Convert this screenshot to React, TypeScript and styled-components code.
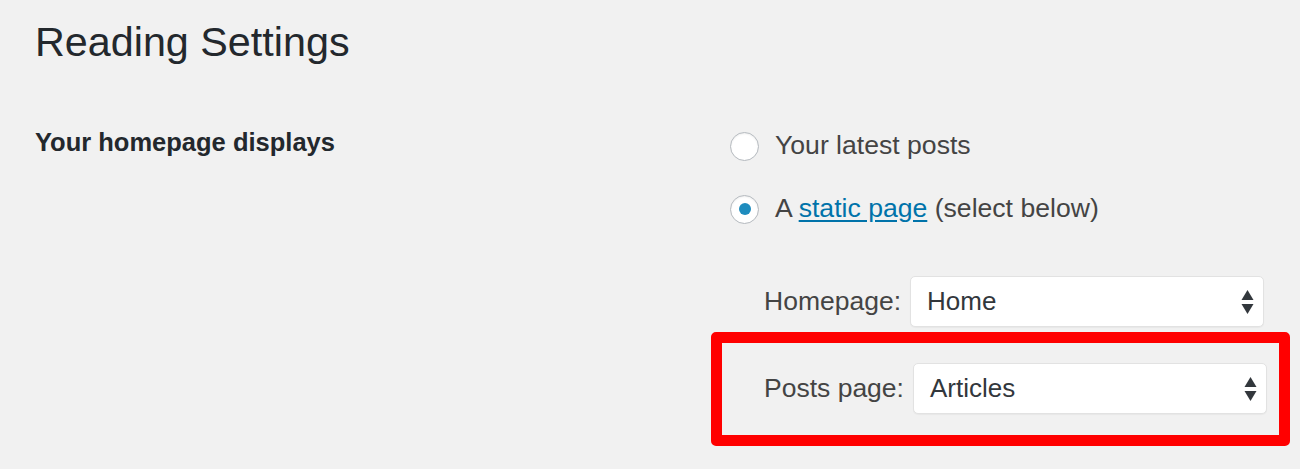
import React from "react";
import styled, { createGlobalStyle } from "styled-components";

const GlobalStyle = createGlobalStyle`
  html, body {
    margin: 0;
    padding: 0;
    background: #f1f1f1;
  }
  body {
    font-family: "Liberation Sans", Arial, sans-serif;
    color: #444;
  }
`;

const Page = styled.div`
  min-height: 100vh;
  padding: 17px 0 0 35px;
  box-sizing: border-box;
  background: #f1f1f1;
`;

const Title = styled.h1`
  margin: 0;
  font-size: 41.3px;
  line-height: 50px;
  font-weight: 400;
  color: #23282d;
`;

const FormTable = styled.div`
  display: grid;
  grid-template-columns: 695px 1fr;
  margin-top: 59.5px;
`;

const RowLabel = styled.div`
  font-size: 25.5px;
  line-height: 30px;
  font-weight: 700;
  color: #23282d;
`;

const Fields = styled.div`
  display: flex;
  flex-direction: column;
`;

const RadioRow = styled.label`
  display: flex;
  align-items: center;
  gap: 16px;
  height: 40px;
  margin-bottom: 22.5px;
  font-size: 26.6px;
  color: #444;
  cursor: pointer;
`;

const RadioCircle = styled.span<{ $checked?: boolean }>`
  flex: none;
  width: 29px;
  height: 29px;
  border-radius: 50%;
  box-sizing: border-box;
  border: 1px solid #b4b9be;
  background: #fff;
  box-shadow: inset 0 1px 2px rgba(0, 0, 0, 0.07);
  display: flex;
  align-items: center;
  justify-content: center;

  &::before {
    content: "";
    display: ${({ $checked }) => ($checked ? "block" : "none")};
    width: 12px;
    height: 12px;
    border-radius: 50%;
    background: #1e8cbe;
  }
`;

const RadioText = styled.span`
  margin-top: -2px;
  white-space: nowrap;
`;

const Link = styled.a`
  color: #0073aa;
  text-decoration: underline;
  text-underline-offset: 3px;
`;

const SelectList = styled.div`
  display: flex;
  flex-direction: column;
  gap: 36px;
  margin-top: 24.5px;
  padding-left: 34px;
`;

const SelectRow = styled.div<{ $highlight?: boolean }>`
  position: relative;
  align-self: flex-start;
  display: flex;
  align-items: center;
  gap: 9px;

  &::after {
    content: "";
    display: ${({ $highlight }) => ($highlight ? "block" : "none")};
    position: absolute;
    top: -31px;
    bottom: -32px;
    left: -53px;
    right: -23px;
    border: 11.5px solid #ff0000;
    border-radius: 5px;
    pointer-events: none;
  }
`;

const FieldLabel = styled.span`
  flex: none;
  white-space: nowrap;
  font-size: 26.5px;
  color: #444;
`;

const Select = styled.div`
  flex: none;
  width: 354px;
  height: 51px;
  box-sizing: border-box;
  display: flex;
  align-items: center;
  justify-content: space-between;
  padding: 0 9px 0 16px;
  background: #fff;
  border: 1px solid #e2e2e2;
  border-radius: 5px;
  box-shadow: 0 1px 1px rgba(0, 0, 0, 0.04);
  font-size: 26px;
  color: #32373c;
`;

const Arrows = () => (
  <svg width="13" height="24" viewBox="0 0 13 24">
    <path d="M6.5 0 L12.5 10 L0.5 10 Z" fill="#32373c" />
    <path d="M0.5 14 L12.5 14 L6.5 24 Z" fill="#32373c" />
  </svg>
);

const App: React.FC = () => {
  return (
    <>
      <GlobalStyle />
      <Page>
        <Title>Reading Settings</Title>
        <FormTable>
          <RowLabel>Your homepage displays</RowLabel>
          <Fields>
            <RadioRow>
              <RadioCircle />
              <RadioText>Your latest posts</RadioText>
            </RadioRow>
            <RadioRow>
              <RadioCircle $checked />
              <RadioText>
                A <Link href="#">static page</Link> (select below)
              </RadioText>
            </RadioRow>
            <SelectList>
              <SelectRow>
                <FieldLabel>Homepage:</FieldLabel>
                <Select>
                  <span>Home</span>
                  <Arrows />
                </Select>
              </SelectRow>
              <SelectRow $highlight>
                <FieldLabel>Posts page:</FieldLabel>
                <Select>
                  <span>Articles</span>
                  <Arrows />
                </Select>
              </SelectRow>
            </SelectList>
          </Fields>
        </FormTable>
      </Page>
    </>
  );
};

export default App;
